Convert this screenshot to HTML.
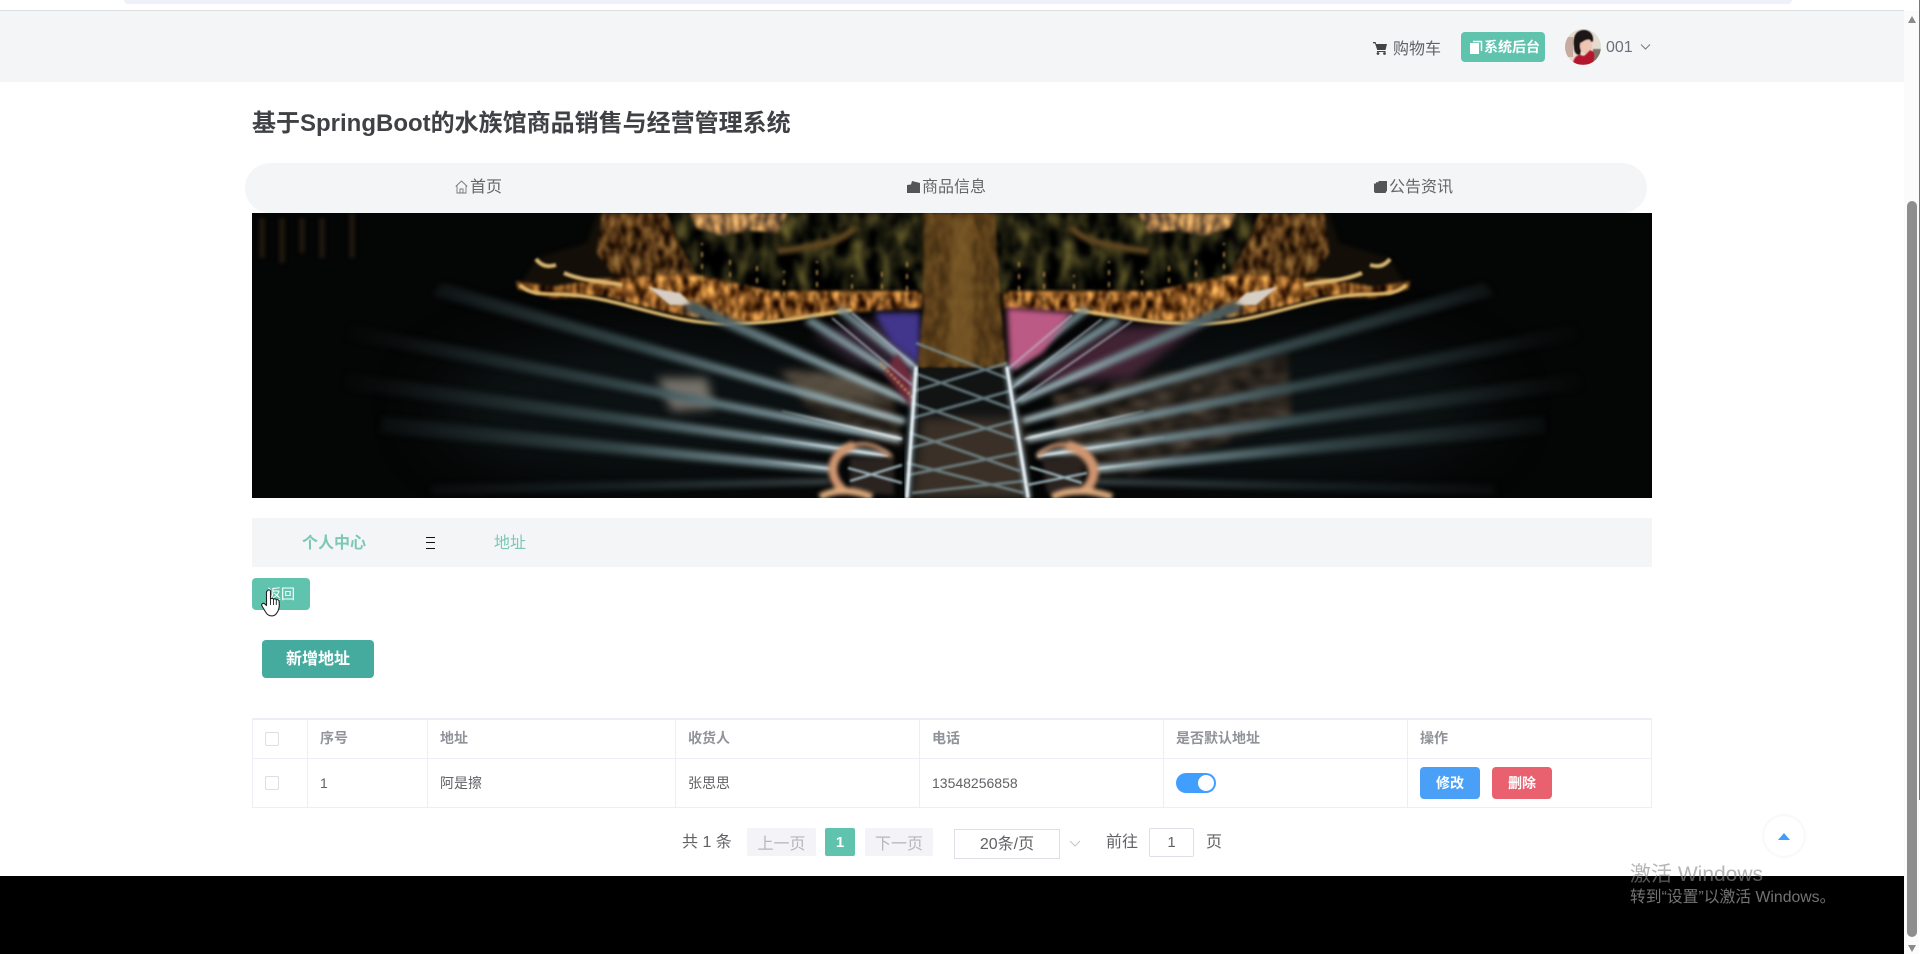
<!DOCTYPE html>
<html lang="zh"><head><meta charset="utf-8"><title>地址</title>
<style>
html,body{margin:0;padding:0;width:1920px;height:954px;overflow:hidden;background:#fff}
body{position:relative;font-family:"Liberation Sans","Noto Sans CJK SC",sans-serif;color:#606266}
.a{position:absolute;white-space:nowrap}
.c{display:flex;align-items:center;justify-content:center}
.ln{position:absolute;background:#ebeef5}
.th{font-size:14px;font-weight:bold;color:#909399;top:728px;line-height:20px}
.td{font-size:14px;color:#606266;top:773px;line-height:20px}
.cb{position:absolute;left:265px;width:12px;height:12px;border:1px solid #dcdfe6;border-radius:2px;background:#fff}
.pg{font-size:16px;color:#606266;line-height:22px;top:832px}
</style></head><body>

<!-- top strip -->
<div class="a" style="left:124px;top:0;width:1668px;height:4px;background:#eef1f9;border-radius:0 0 8px 8px"></div>
<div class="a" style="left:0;top:10px;width:1904px;height:1px;background:#dcdedf"></div>
<div class="a" style="left:0;top:11px;width:1904px;height:71px;background:#f4f5f7"></div>

<!-- header right -->
<svg class="a" style="left:1373px;top:41px" width="14" height="14" viewBox="0 0 14 14"><path d="M0 1h2.6l.6 2H14l-1.5 6H4.2L2 2.400H0z" fill="#444"/><path d="M4 10h8.600v1H4z" fill="#444"/><circle cx="5" cy="12.500" r="1.400" fill="#444"/><circle cx="11.500" cy="12.500" r="1.400" fill="#444"/></svg>
<div class="a" style="left:1393px;top:38px;font-size:16px;line-height:24px;color:#606266">购物车</div>
<div class="a c" style="left:1461px;top:32px;width:80px;padding-left:4px;height:30px;background:#5fc3ad;border-radius:4px;color:#fff;font-size:14px;font-weight:bold">
<svg width="13" height="14" viewBox="0 0 13 14" style="margin-right:1px"><path d="M0 3h9v11H0z" fill="#fff"/><path d="M3 1.500h8.500V11" fill="none" stroke="#fff" stroke-width="1.500"/></svg>系统后台</div>
<svg class="a" style="left:1565px;top:29px" width="36" height="36" viewBox="0 0 36 36"><defs><clipPath id="av"><circle cx="18" cy="18" r="18"/></clipPath><filter id="avb"><feGaussianBlur stdDeviation=".6"/></filter></defs><g clip-path="url(#av)"><rect width="36" height="36" fill="#e5dcd0"/><rect x="0" y="8" width="8" height="20" fill="#c7aaa0"/><g filter="url(#avb)"><path d="M28 20h8v16h-8z" fill="#7d746c"/><path d="M9 18C7 4 14 1 19 1s10 4 9 11c-1 2-6 1-9 1-2 3-3 9-4 13-4 0-6-3-6-8z" fill="#1c1214"/><ellipse cx="21" cy="17" rx="6" ry="8" fill="#efc5b3"/><path d="M15 10c3-3 9-3 12 1-5-1-7 0-11 3z" fill="#1c1214"/><path d="M8 36c0-6 3-10 7-10l4 1 6-6 4 2c1 4 0 9-1 13z" fill="#b4122e"/></g></g></svg>
<div class="a" style="left:1606px;top:36px;font-size:16px;line-height:24px;color:#6d7078">001</div>
<svg class="a" style="left:1640px;top:43px" width="11" height="8" viewBox="0 0 11 8"><path d="M1 1.500l4.500 4.500L10 1.500" fill="none" stroke="#777" stroke-width="1"/></svg>

<!-- title -->
<div class="a" style="left:252px;top:109px;font-size:24px;font-weight:bold;line-height:30px;color:#3f4144">基于SpringBoot的水族馆商品销售与经营管理系统</div>

<!-- nav -->
<div class="a" style="left:245px;top:163px;width:1402px;height:50px;background:#f4f5f7;border-radius:25px"></div>
<svg class="a" style="left:455px;top:180px" width="13" height="14" viewBox="0 0 13 14"><path d="M.7 6.500L6.500 1l5.800 5.500M2 5.800V13h9V5.800M5 13V9h3v4" fill="none" stroke="#777" stroke-width=".9"/></svg>
<div class="a" style="left:470px;top:176px;font-size:16px;line-height:24px;color:#666">首页</div>
<svg class="a" style="left:907px;top:181px" width="13" height="12" viewBox="0 0 13 12"><path d="M0 4l4-.5L5 0l8 2v10H0z" fill="#555"/></svg>
<div class="a" style="left:922px;top:176px;font-size:16px;line-height:24px;color:#666">商品信息</div>
<svg class="a" style="left:1373px;top:181px" width="14" height="12" viewBox="0 0 14 12"><path d="M1 2.500h2V1.200h2.500V0H14v9.500l-1.500 2.500H2L1 10.500z" fill="#555"/></svg>
<div class="a" style="left:1389px;top:176px;font-size:16px;line-height:24px;color:#666">公告资讯</div>

<!-- banner -->
<svg class="a" style="left:252px;top:213px" width="1400" height="285" viewBox="0 0 1400 285" color-interpolation-filters="sRGB">
<defs>
<filter id="b1" x="-20%" y="-20%" width="140%" height="140%"><feGaussianBlur stdDeviation="1"/></filter>
<filter id="b2" x="-30%" y="-30%" width="160%" height="160%"><feGaussianBlur stdDeviation="2.200"/></filter>
<filter id="b3" x="-30%" y="-30%" width="160%" height="160%"><feGaussianBlur stdDeviation="3"/></filter>
<filter id="b5" x="-30%" y="-30%" width="160%" height="160%"><feGaussianBlur stdDeviation="5"/></filter>
<filter id="b12" x="-60%" y="-80%" width="220%" height="260%"><feGaussianBlur stdDeviation="30"/></filter>
<filter id="gold" x="-5%" y="-5%" width="110%" height="110%" color-interpolation-filters="sRGB">
  <feTurbulence type="fractalNoise" baseFrequency=".16 .07" numOctaves="3" seed="7" result="n"/>
  <feColorMatrix in="n" type="matrix" values="1.900 0 0 0 -.40  1.450 0 0 0 -.38  .8 0 0 0 -.26  0 0 0 0 1" result="c"/>
  <feComposite in="c" in2="SourceAlpha" operator="in" result="t"/>
  <feGaussianBlur in="t" stdDeviation="1.700"/>
</filter>
<filter id="dark" x="-5%" y="-5%" width="110%" height="110%" color-interpolation-filters="sRGB">
  <feTurbulence type="fractalNoise" baseFrequency=".07 .035" numOctaves="3" seed="11" result="n"/>
  <feColorMatrix in="n" type="matrix" values=".9 0 0 0 -.36  .8 0 0 0 -.31  .35 0 0 0 -.13  0 0 0 0 1" result="c"/>
  <feComposite in="c" in2="SourceAlpha" operator="in" result="t"/>
  <feGaussianBlur in="t" stdDeviation="2"/>
</filter>
<filter id="noise" x="-5%" y="-5%" width="110%" height="110%" color-interpolation-filters="sRGB">
  <feTurbulence type="fractalNoise" baseFrequency=".05 .25" numOctaves="2" seed="3" result="n"/>
  <feColorMatrix in="n" type="matrix" values=".8 0 0 0 -.18  .68 0 0 0 -.16  .55 0 0 0 -.13  0 0 0 0 1" result="c"/>
  <feComposite in="c" in2="SourceAlpha" operator="in" result="t"/>
  <feGaussianBlur in="t" stdDeviation="3.500"/>
</filter>
<radialGradient id="beamL" gradientUnits="userSpaceOnUse" cx="665" cy="245" r="600">
  <stop offset="0" stop-color="#e8f5f8"/><stop offset=".1" stop-color="#bcd6dc"/><stop offset=".25" stop-color="#7a9298"/><stop offset=".5" stop-color="#35474a"/><stop offset=".8" stop-color="#141b1c"/><stop offset="1" stop-color="#0a0d0d" stop-opacity="0"/>
</radialGradient>
<radialGradient id="beamH" gradientUnits="userSpaceOnUse" cx="640" cy="240" r="150">
  <stop offset="0" stop-color="#fff"/><stop offset=".5" stop-color="#dcecf0" stop-opacity=".7"/><stop offset="1" stop-color="#a0bcc2" stop-opacity="0"/>
</radialGradient>
<clipPath id="bn"><rect width="1400" height="285"/></clipPath>
<g id="half">
  <!-- island: tree area, gold ring -->
  <path d="M345 0H712V94L600 100L486 112L400 92L300 85L268 72L285 45L335 30z" fill="#130f08" filter="url(#b2)"/>
  <path d="M414 0H680V80L610 78L520 80L445 62L430 40z" fill="#000" filter="url(#dark)"/>
  <path d="M350 0L414 0L432 40L445 62L400 70L360 60L345 40Z" fill="#000" filter="url(#gold)" opacity=".55"/>
  <path d="M385 64L445 62L520 78L670 78L670 95L600 99L540 106L486 110L430 102L385 92L350 82L300 85L266 76L264 68L300 74L345 66Z" fill="#000" filter="url(#gold)"/>
  <path d="M438 0H535L525 20L500 17L470 22L445 15z" fill="#000" filter="url(#gold)"/>
  <path d="M438 0H535L525 20L500 17L470 22L445 15z" fill="#e6d4ac" opacity=".28" filter="url(#b2)"/>
  <path d="M268 72C280 84 300 80 320 82C350 84 385 96 420 104C445 110 470 112 500 110C540 108 570 100 600 97" fill="none" stroke="#dcb76e" stroke-width="3.500" filter="url(#b1)"/>
  <path d="M284 46C290 54 297 54 304 52M312 60C330 68 350 68 370 72" fill="none" stroke="#d8b672" stroke-width="4" filter="url(#b1)"/>
  <path d="M396 74L428 80L440 92L418 92z" fill="#d8cfc4" filter="url(#b1)"/>
  <path d="M525 38C555 35 590 30 603 14" fill="none" stroke="#5e4720" stroke-width="7" filter="url(#b2)"/>
  <path d="M450 68V30M478 76V44M505 82V50M532 84V58M565 86V48M600 88V62M630 88V52M655 90V48" stroke="#a07e40" stroke-width="2" stroke-dasharray="5 7" filter="url(#b1)"/>
  <!-- beams: thin wedges with shared radial gradient -->
  <g fill="url(#beamL)" filter="url(#b3)">
    <path d="M664 150L590 94L584 98L660 156z"/>
    <path d="M662 170L560 104L552 109L660 175z"/>
    <path d="M658 186L440 88L430 96L656 191z"/>
    <path d="M654 206L190 70L180 82L652 211z"/>
    <path d="M650 224L100 112L94 126L648 229z"/>
    <path d="M636 240L96 160L92 176L634 245z"/>
    <path d="M580 253L130 203L128 220L578 259z"/>
    <path d="M578 266L180 272L178 282L578 271z" opacity=".4"/>
  </g>
  <g stroke="url(#beamH)" fill="none" stroke-width="2" filter="url(#b1)">
    <line x1="650" y1="226" x2="530" y2="198"/>
    <line x1="636" y1="243" x2="510" y2="224"/>
    <line x1="580" y1="256" x2="500" y2="246"/>
  </g>
</g>
</defs>
<g clip-path="url(#bn)">
<rect width="1400" height="285" fill="#040505"/>
<!-- soft haze -->
<ellipse cx="400" cy="195" rx="220" ry="70" fill="#10181a" filter="url(#b12)" opacity=".7"/>
<ellipse cx="1020" cy="195" rx="220" ry="70" fill="#10181a" filter="url(#b12)" opacity=".7"/>
<!-- noisy terraces -->
<path d="M800 180L1035 140L1040 205L880 262L810 255z" fill="#000" filter="url(#noise)" opacity=".75"/>
<path d="M530 158L640 170L650 235L560 200z" fill="#000" filter="url(#noise)" opacity=".7"/>
<path d="M405 165H455L462 195L420 198z" fill="#77726b" filter="url(#b5)"/>
<path d="M525 158L600 160L640 190L560 185z" fill="#6a6050" filter="url(#b5)" opacity=".7"/>
<path d="M560 120L660 100L665 165L600 150z" fill="#3d2a3e" filter="url(#b5)" opacity=".7"/>
<path d="M770 170L860 115L950 110L880 165z" fill="#5a2f46" filter="url(#b5)" opacity=".7"/>
<use href="#half"/>
<use href="#half" transform="translate(1422 0) scale(-1 1)"/>
<!-- coloured plaza -->
<path d="M622 100L668 100V152L640 130z" fill="#41358c" filter="url(#b3)"/>
<path d="M755 95L820 100L790 140L758 158z" fill="#bb5a84" filter="url(#b3)"/>
<path d="M632 160L662 198V165L645 140z" fill="#6d2b3d" filter="url(#b2)"/>
<g stroke="#b8c2ce" stroke-width="1.800" filter="url(#b1)" opacity=".75"><line x1="664" y1="154" x2="600" y2="100"/><line x1="660" y1="172" x2="580" y2="105"/><line x1="756" y1="156" x2="820" y2="102"/><line x1="760" y1="175" x2="850" y2="106"/><line x1="762" y1="190" x2="880" y2="108"/></g>
<path d="M628 150L664 188" stroke="#c0904c" stroke-width="2.500" stroke-dasharray="3 2" filter="url(#b1)"/>
<!-- central road -->
<path d="M672 0H742L748 95L754 155L666 155L672 95z" fill="#000" filter="url(#gold)" opacity=".55"/>
<path d="M672 0H742L748 95L754 155L666 155L672 95z" fill="#5d421b" opacity=".7" filter="url(#b2)"/>
<path d="M700 5H720L722 150H696z" fill="#86632c" opacity=".6" filter="url(#b3)"/>
<!-- lower road -->
<path d="M665 155H755L778 285H654z" fill="#121313" filter="url(#b1)"/>
<path d="M670 205H770L775 285H660z" fill="#3a3027" filter="url(#b5)"/>
<!-- lattice -->
<g stroke="#7c969c" stroke-width="2.800" filter="url(#b1)" opacity=".75" fill="none">
<path d="M664 130L755 165M662 160L758 195M660 190L762 225M658 220L768 258M655 250L772 280"/>
<path d="M755 150L662 178M758 178L660 205M762 208L658 235M766 240L656 262M772 268L660 280"/>
</g>
<path d="M714 200V285" stroke="#a86e38" stroke-width="2" filter="url(#b1)"/>
<!-- bright vertical lights -->
<g fill="none" stroke-linecap="round">
<line x1="664" y1="155" x2="655" y2="284" stroke="#a6c4d0" stroke-width="7" filter="url(#b2)" opacity=".6"/>
<line x1="755" y1="155" x2="776" y2="284" stroke="#a6c4d0" stroke-width="7" filter="url(#b2)" opacity=".6"/>
<line x1="664" y1="155" x2="655" y2="284" stroke="#f6fbff" stroke-width="3" filter="url(#b1)"/>
<line x1="755" y1="155" x2="776" y2="284" stroke="#f6fbff" stroke-width="3" filter="url(#b1)"/>
</g>
<!-- orange round terraces -->
<path d="M598 245L642 245V282L598 280z" fill="#2a2320" filter="url(#b2)"/>
<path d="M790 245L830 245V282L795 280z" fill="#2a2320" filter="url(#b2)"/>
<g fill="none" stroke="#cf9670" filter="url(#b2)">
<path d="M602 232C578 240 574 262 592 278" stroke-width="9"/>
<path d="M602 232C618 228 630 236 640 244" stroke-width="4"/>
<path d="M815 232C842 240 850 262 832 278" stroke-width="10"/>
<path d="M815 232C800 230 790 238 785 244" stroke-width="4"/>
<path d="M568 284Q590 272 620 284" stroke="#dcaa7c" stroke-width="7"/>
<path d="M800 284Q825 272 860 284" stroke="#dcaa7c" stroke-width="7"/>
</g>
<path d="M596 255L650 270M598 268L650 252M835 260L775 272M830 270L778 254" stroke="#9fb8be" stroke-width="2.400" filter="url(#b1)"/>
<!-- top-left reflections -->
<path d="M10 5V45M30 5V50M50 5V40M70 5V45M100 0V45" stroke="#241b10" stroke-width="5" filter="url(#b2)"/>
<path d="M118 0V50" stroke="#555451" stroke-width="8" filter="url(#b5)"/>
<path d="M165 5V30" stroke="#6e6e74" stroke-width="4" filter="url(#b2)"/>
</g>
</svg>

<!-- breadcrumb -->
<div class="a" style="left:252px;top:518px;width:1400px;height:49px;background:#f4f5f7"></div>
<div class="a" style="left:302px;top:532px;font-size:16px;font-weight:bold;line-height:24px;color:#7cc8b3">个人中心</div>
<div class="a" style="left:426px;top:537px;width:9px;height:1px;background:#111;box-shadow:0 5px 0 #111,0 11px 0 #111"></div>
<div class="a" style="left:494px;top:532px;font-size:16px;line-height:24px;color:#7cc8b3">地址</div>

<!-- buttons -->
<div class="a c" style="left:252px;top:578px;width:58px;height:32px;background:#5fc3ad;border-radius:4px;color:#fff;font-size:14px">返回</div>
<div class="a c" style="left:262px;top:640px;width:112px;height:34px;padding-bottom:4px;background:#46ab9f;border-radius:4px;color:#fff;font-size:16px;font-weight:bold">新增地址</div>

<!-- table -->
<div class="ln" style="left:252px;top:718px;width:1400px;height:2px"></div>
<div class="ln" style="left:252px;top:758px;width:1400px;height:1px"></div>
<div class="ln" style="left:252px;top:807px;width:1400px;height:1px"></div>
<div class="ln" style="left:252px;top:718px;width:1px;height:90px"></div>
<div class="ln" style="left:307px;top:718px;width:1px;height:90px"></div>
<div class="ln" style="left:427px;top:718px;width:1px;height:90px"></div>
<div class="ln" style="left:675px;top:718px;width:1px;height:90px"></div>
<div class="ln" style="left:919px;top:718px;width:1px;height:90px"></div>
<div class="ln" style="left:1163px;top:718px;width:1px;height:90px"></div>
<div class="ln" style="left:1407px;top:718px;width:1px;height:90px"></div>
<div class="ln" style="left:1651px;top:718px;width:1px;height:90px"></div>
<div class="cb" style="top:732px"></div><div class="cb" style="top:776px"></div>
<div class="a th" style="left:320px">序号</div>
<div class="a th" style="left:440px">地址</div>
<div class="a th" style="left:688px">收货人</div>
<div class="a th" style="left:932px">电话</div>
<div class="a th" style="left:1176px">是否默认地址</div>
<div class="a th" style="left:1420px">操作</div>
<div class="a td" style="left:320px">1</div>
<div class="a td" style="left:440px">阿是擦</div>
<div class="a td" style="left:688px">张思思</div>
<div class="a td" style="left:932px">13548256858</div>
<div class="a" style="left:1176px;top:773px;width:40px;height:20px;border-radius:10px;background:#409eff"></div>
<div class="a" style="left:1198px;top:775px;width:16px;height:16px;border-radius:50%;background:#fff"></div>
<div class="a c" style="left:1420px;top:767px;width:60px;height:32px;background:#4aa0f7;border-radius:4px;color:#fff;font-size:14px;font-weight:bold">修改</div>
<div class="a c" style="left:1492px;top:767px;width:60px;height:32px;background:#e9606f;border-radius:4px;color:#fff;font-size:14px;font-weight:bold">删除</div>

<!-- pagination -->
<div class="a pg" style="left:682px">共 1 条</div>
<div class="a c" style="left:747px;top:828px;width:69px;height:28px;background:#f4f4f8;border-radius:2px;color:#b4b7bd;font-size:16px">上一页</div>
<div class="a c" style="left:825px;top:828px;width:30px;height:28px;background:#5fc3ad;border-radius:2px;color:#fff;font-size:15px;font-weight:bold">1</div>
<div class="a c" style="left:865px;top:828px;width:68px;height:28px;background:#f4f4f8;border-radius:2px;color:#b4b7bd;font-size:16px">下一页</div>
<div class="a c" style="left:954px;top:829px;width:104px;height:24px;padding-bottom:4px;border:1px solid #dcdfe6;color:#606266;font-size:16px">20条/页</div>
<svg class="a" style="left:1069px;top:840px" width="12" height="8" viewBox="0 0 12 8"><path d="M1 1l5 5 5-5" fill="none" stroke="#c0c4cc" stroke-width="1"/></svg>
<div class="a pg" style="left:1106px">前往</div>
<div class="a c" style="left:1149px;top:828px;width:43px;height:27px;border:1px solid #dcdfe6;border-radius:2px;color:#606266;font-size:15px">1</div>
<div class="a pg" style="left:1206px">页</div>

<!-- back to top -->
<div class="a" style="left:1764px;top:816px;width:40px;height:40px;border-radius:50%;background:#fff;box-shadow:0 0 4px rgba(0,0,0,.08)"></div>
<div class="a" style="left:1778px;top:833px;width:0;height:0;border-left:6.500px solid transparent;border-right:6.500px solid transparent;border-bottom:7px solid #409eff"></div>

<!-- black bottom -->
<div class="a" style="left:0;top:876px;width:1904px;height:78px;background:#000"></div>

<!-- scrollbar -->
<div class="a" style="left:1904px;top:11px;width:15px;height:943px;background:#fbfbfb"></div>
<div class="a" style="left:1919px;top:0;width:1px;height:800px;background:#777"></div>
<div class="a" style="left:1907px;top:201px;width:10px;height:736px;background:#8e8e8e;border-radius:5px"></div>
<div class="a" style="left:1908px;top:16px;width:0;height:0;border-left:4.500px solid transparent;border-right:4.500px solid transparent;border-bottom:7px solid #8a8a8a"></div>
<div class="a" style="left:1908px;top:945px;width:0;height:0;border-left:4.500px solid transparent;border-right:4.500px solid transparent;border-top:7px solid #8a8a8a"></div>

<!-- windows watermark -->
<div class="a" style="left:1630px;top:861px;font-size:21px;line-height:27px;color:rgba(135,135,135,.62)">激活 Windows</div>
<div class="a" style="left:1630px;top:888px;font-size:15.800px;line-height:20px;color:rgba(135,135,135,.85)">转到“设置”以激活 Windows。</div>

<!-- hand cursor -->
<svg class="a" style="left:261px;top:589px" width="21" height="28" viewBox="0 0 21 28"><path d="M6 2c1-1.500 3-1.500 3.500 0v8c1-1 2.500-1 3 .3.800-.8 2.500-.6 2.800.6 1-.6 2.500-.2 2.700 1 .6 4 .3 8-1.500 11-1 2-2.500 4-5.500 4-3.500 0-5-1.500-6.500-4L1 17c-1-1.500.5-3.500 2.500-2.300L5.500 16.500V3z" fill="#fff" stroke="#222" stroke-width="1.100" stroke-linejoin="round"/><path d="M9.500 10v6M12.500 10.500V16M15.300 11.200V16" stroke="#222" stroke-width=".9" fill="none"/></svg>
</body></html>
